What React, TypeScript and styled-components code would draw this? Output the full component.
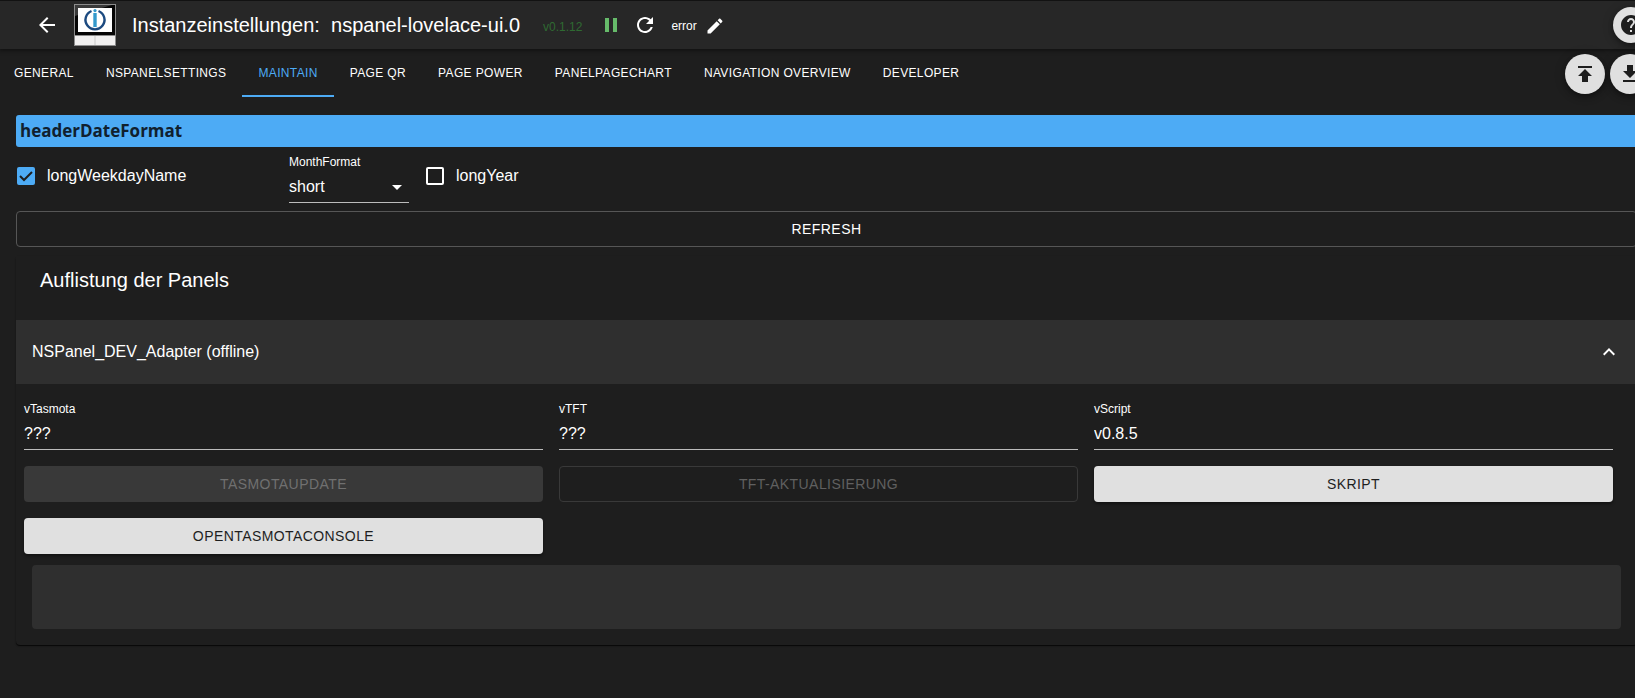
import React, { useState } from 'react';
import styled, { createGlobalStyle } from 'styled-components';

const blue = '#4dabf5';
const surface = '#1e1e1e';
const light = '#e0e0e0';

const GlobalStyle = createGlobalStyle`
  * { box-sizing: border-box; }
  html, body { margin: 0; background: ${surface}; }
  body {
    color: #fff;
    font-family: "Liberation Sans", Arial, sans-serif;
    font-size: 16px;
    line-height: 24px;
    overflow-x: hidden;
  }
  button, input, select { font: inherit; color: inherit; margin: 0; }
`;

const Page = styled.div`
  min-height: 100vh;
  overflow: hidden;
  border-top: 1px solid #121212;
`;

const AppBar = styled.header`
  display: flex;
  align-items: center;
  height: 48px;
  margin-right: -14px;
  padding-left: 35px;
  background: #272727;
  box-shadow: 0 1px 4px 1px rgba(0, 0, 0, 0.4);
`;

const IconButton = styled.button`
  display: flex;
  padding: 0;
  border: 0;
  background: none;
  cursor: pointer;
`;

const Logo = styled.svg`
  flex: none;
  width: 42px;
  height: 42px;
  margin: 0 16px 0 15px;
`;

const Title = styled.h1`
  margin: 0 23px 0 0;
  font-size: 20px;
  font-weight: 400;
  line-height: 28px;
  white-space: pre;
`;

const Version = styled.span`
  color: #2f6a32;
  font-size: 12px;
  padding-top: 4px;
`;

const Controls = styled.div`
  display: flex;
  align-items: center;
  gap: 10px;
  margin-left: 17px;
`;

const LogLevel = styled.div`
  display: flex;
  align-items: center;
  gap: 8px;
  margin-left: 4px;
  padding-top: 2px;
  font-size: 12px;
`;

const Spacer = styled.div`
  flex: 1;
`;

const Fab = styled.button<{ $size: number }>`
  display: flex;
  flex: none;
  align-items: center;
  justify-content: center;
  width: ${(p) => p.$size}px;
  height: ${(p) => p.$size}px;
  padding: 0;
  border: 0;
  border-radius: 50%;
  background: ${light};
  color: ${surface};
  box-shadow: 0 3px 5px rgba(0, 0, 0, 0.3), 0 1px 12px rgba(0, 0, 0, 0.2);
  cursor: pointer;
`;

const TabBar = styled.nav`
  display: flex;
  align-items: center;
  height: 48px;
  margin-right: -15px;
`;

const Tab = styled.button<{ $active?: boolean }>`
  height: 48px;
  padding: 2px 16px 0;
  border: 0;
  border-bottom: 2px solid ${(p) => (p.$active ? blue : 'transparent')};
  background: none;
  color: ${(p) => (p.$active ? blue : '#fff')};
  font-size: 12px;
  letter-spacing: 0.03em;
  text-transform: uppercase;
  white-space: nowrap;
  cursor: pointer;
  &:first-child { padding-left: 14px; }
`;

const FabGroup = styled.div`
  display: flex;
  gap: 5px;
  padding-top: 2px;
`;

const Content = styled.main`
  margin: 18px -2px 0 16px;
`;

const SectionTitle = styled.h2`
  margin: 0;
  padding: 0 4px;
  border-radius: 3px;
  background: ${blue};
  color: #10202e;
  font-family: "Open Sans", "Noto Sans", sans-serif;
  font-size: 17px;
  font-weight: 700;
  line-height: 32px;
`;

const Options = styled.div`
  display: flex;
  align-items: center;
  height: 64px;
  padding-bottom: 2px;
`;

const CheckLabel = styled.label<{ $width?: number }>`
  display: flex;
  align-items: center;
  gap: 12px;
  width: ${(p) => (p.$width ? `${p.$width}px` : 'auto')};
  padding: 0 1px 4px;
  cursor: pointer;
`;

const Checkbox = styled.input`
  appearance: none;
  width: 18px;
  height: 18px;
  border: 2px solid #fff;
  border-radius: 2px;
  cursor: pointer;
  &:checked {
    border-color: ${blue};
    background: ${blue} url("data:image/svg+xml,%3Csvg xmlns='http://www.w3.org/2000/svg' viewBox='0 0 14 14'%3E%3Cpath d='M1 7l4 4 8-8' fill='none' stroke='%231e1e1e' stroke-width='2'/%3E%3C/svg%3E") center / 14px 14px no-repeat;
  }
`;

const Field = styled.div<{ $width?: number }>`
  display: flex;
  flex-direction: column;
  width: ${(p) => (p.$width ? `${p.$width}px` : 'auto')};
`;

const FieldLabel = styled.label`
  font-size: 12px;
  line-height: 16px;
`;

const TextInput = styled.input`
  width: 100%;
  height: 33px;
  padding: 2px 0 0;
  border: 0;
  border-bottom: 1px solid #bcbcbc;
  border-radius: 0;
  background: none;
  outline: 0;
`;

const SelectInput = styled.select`
  appearance: none;
  height: 33px;
  padding: 2px 0 0;
  border: 0;
  border-bottom: 1px solid #bcbcbc;
  border-radius: 0;
  outline: 0;
  background: url("data:image/svg+xml,%3Csvg xmlns='http://www.w3.org/2000/svg' viewBox='0 0 24 24'%3E%3Cpath d='M7 10l5 5 5-5z' fill='%23fff'/%3E%3C/svg%3E") right bottom 3px / 24px 24px no-repeat;
  option { color: #000; }
`;

const MonthField = styled(Field)`
  margin-right: 16px;
`;

const Button = styled.button<{ $variant: 'outlined' | 'contained' }>`
  width: 100%;
  height: 36px;
  padding: 0 16px;
  border: ${(p) => (p.$variant === 'outlined' ? '1px solid #565656' : '0')};
  border-radius: 4px;
  background: ${(p) => (p.$variant === 'outlined' ? 'transparent' : light)};
  color: ${(p) => (p.$variant === 'outlined' ? '#fff' : surface)};
  box-shadow: ${(p) => (p.$variant === 'outlined' ? 'none' : '0 2px 3px rgba(0, 0, 0, 0.4)')};
  font-size: 14px;
  letter-spacing: 0.03em;
  text-transform: uppercase;
  cursor: pointer;
  &:disabled {
    border-color: #393939;
    background: ${(p) => (p.$variant === 'outlined' ? 'transparent' : '#393939')};
    color: ${(p) => (p.$variant === 'outlined' ? '#606060' : '#707070')};
    box-shadow: none;
    cursor: default;
  }
`;

const Paper = styled.section`
  margin-top: 9px;
  padding-bottom: 16px;
  border-radius: 4px;
  box-shadow: 0 1px 1px rgba(0, 0, 0, 0.7), 0 1px 2px rgba(0, 0, 0, 0.2);
`;

const PaperTitle = styled.h2`
  margin: 0;
  padding: 8px 24px 24px;
  background: ${surface};
  font-size: 20px;
  font-weight: 400;
  line-height: 32px;
`;

const AccordionHeader = styled.button`
  display: flex;
  align-items: center;
  justify-content: space-between;
  width: 100%;
  height: 64px;
  padding: 0 16px;
  border: 0;
  background: #2f2f2f;
  text-align: left;
  cursor: pointer;
`;

const PanelGrid = styled.div`
  display: grid;
  grid-template-columns: repeat(3, 1fr);
  gap: 16px;
  padding: 17px 24px 0 8px;
`;

const Output = styled.div`
  height: 64px;
  margin: 11px 16px 0;
  border-radius: 4px;
  background: #2f2f2f;
`;

const Icon = ({ d, size = 24, color = 'currentColor' }: { d: string; size?: number; color?: string }) => (
  <svg width={size} height={size} viewBox="0 0 24 24" fill={color} aria-hidden="true">
    <path d={d} />
  </svg>
);

const icons = {
  back: 'M20 11H7.83l5.59-5.59L12 4l-8 8 8 8 1.41-1.41L7.83 13H20v-2z',
  pause: 'M6 19h4V5H6v14zm8-14v14h4V5h-4z',
  refresh:
    'M17.65 6.35C16.2 4.9 14.21 4 12 4c-4.42 0-7.99 3.58-7.99 8s3.57 8 7.99 8c3.73 0 6.84-2.55 7.73-6h-2.08c-.82 2.33-3.04 4-5.65 4-3.31 0-6-2.69-6-6s2.69-6 6-6c1.66 0 3.14.69 4.22 1.78L13 11h7V4l-2.35 2.35z',
  edit: 'M3 17.25V21h3.75L17.81 9.94l-3.75-3.75L3 17.25zM20.71 7.04c.39-.39.39-1.02 0-1.41l-2.34-2.34c-.39-.39-1.02-.39-1.41 0l-1.83 1.83 3.75 3.75 1.83-1.83z',
  help: 'M12 2C6.48 2 2 6.48 2 12s4.48 10 10 10 10-4.48 10-10S17.52 2 12 2zm1 17h-2v-2h2v2zm2.07-7.75l-.9.92C13.45 12.9 13 13.5 13 15h-2v-.5c0-1.1.45-2.1 1.17-2.83l1.24-1.26c.37-.36.59-.86.59-1.41 0-1.1-.9-2-2-2s-2 .9-2 2H8c0-2.21 1.79-4 4-4s4 1.79 4 4c0 .88-.36 1.68-.93 2.25z',
  upload: 'M5 4v2h14V4H5zm0 10h4v6h6v-6h4l-7-7-7 7z',
  download: 'M19 9h-4V3H9v6H5l7 7 7-7zM5 18v2h14v-2H5z',
  up: 'M12 8l-6 6 1.41 1.41L12 10.83l4.59 4.58L18 14z',
};

const tabs = [
  'General',
  'NSPanelSettings',
  'Maintain',
  'Page QR',
  'Page Power',
  'PanelPageChart',
  'Navigation Overview',
  'Developer',
];

const fields = [
  { id: 'vTasmota', value: '???' },
  { id: 'vTFT', value: '???' },
  { id: 'vScript', value: 'v0.8.5' },
];

export default function App() {
  const [active, setActive] = useState('Maintain');
  const [open, setOpen] = useState(true);

  return (
    <>
      <GlobalStyle />
      <Page>
        <AppBar>
          <IconButton aria-label="Zurück">
            <Icon d={icons.back} />
          </IconButton>
          <Logo viewBox="0 0 42 42" aria-hidden="true">
            <rect width="42" height="42" fill="#8c8c8c" />
            <rect x="1" y="1" width="40" height="30" fill="#050505" />
            <path d="M1 1H38L1 12z" fill="#3a3a3a" />
            <rect x="4" y="4" width="34" height="24" fill="#fff" />
            <rect x="1" y="32" width="40" height="9" fill="#f1f0f0" />
            <path d="M21 32v9" stroke="#c8c8c8" />
            <path d="M17.5 7a9.5 9.5 0 1 0 7 0" fill="none" stroke="#1c4a80" strokeWidth="2.4" />
            <path d="M21 9v14" stroke="#3399cc" strokeWidth="3.4" />
            <circle cx="21" cy="6.6" r="1.6" fill="#3399cc" />
          </Logo>
          <Title>{'Instanzeinstellungen:  nspanel-lovelace-ui.0'}</Title>
          <Version>v0.1.12</Version>
          <Controls>
            <IconButton aria-label="Pause">
              <Icon d={icons.pause} color="#66bb6a" />
            </IconButton>
            <IconButton aria-label="Neu starten">
              <Icon d={icons.refresh} />
            </IconButton>
            <LogLevel>
              error
              <IconButton aria-label="Log-Level bearbeiten">
                <Icon d={icons.edit} size={20} />
              </IconButton>
            </LogLevel>
          </Controls>
          <Spacer />
          <Fab $size={36} aria-label="Hilfe">
            <Icon d={icons.help} />
          </Fab>
        </AppBar>

        <TabBar>
          {tabs.map((t) => (
            <Tab key={t} $active={t === active} onClick={() => setActive(t)}>
              {t}
            </Tab>
          ))}
          <Spacer />
          <FabGroup>
            <Fab $size={40} aria-label="Importieren">
              <Icon d={icons.upload} />
            </Fab>
            <Fab $size={40} aria-label="Exportieren">
              <Icon d={icons.download} />
            </Fab>
          </FabGroup>
        </TabBar>

        <Content>
          <SectionTitle>headerDateFormat</SectionTitle>
          <Options>
            <CheckLabel $width={273}>
              <Checkbox type="checkbox" defaultChecked />
              longWeekdayName
            </CheckLabel>
            <MonthField $width={120}>
              <FieldLabel htmlFor="month">MonthFormat</FieldLabel>
              <SelectInput id="month" defaultValue="short">
                <option>short</option>
                <option>long</option>
              </SelectInput>
            </MonthField>
            <CheckLabel>
              <Checkbox type="checkbox" />
              longYear
            </CheckLabel>
          </Options>
          <Button $variant="outlined">Refresh</Button>

          <Paper>
            <PaperTitle>Auflistung der Panels</PaperTitle>
            <AccordionHeader aria-expanded={open} onClick={() => setOpen(!open)}>
              NSPanel_DEV_Adapter (offline)
              <Icon d={icons.up} />
            </AccordionHeader>
            {open && (
              <>
                <PanelGrid>
                  {fields.map((f) => (
                    <Field key={f.id}>
                      <FieldLabel htmlFor={f.id}>{f.id}</FieldLabel>
                      <TextInput id={f.id} defaultValue={f.value} />
                    </Field>
                  ))}
                  <Button $variant="contained" disabled>TasmotaUpdate</Button>
                  <Button $variant="outlined" disabled>TFT-Aktualisierung</Button>
                  <Button $variant="contained">Skript</Button>
                  <Button $variant="contained">openTasmotaConsole</Button>
                </PanelGrid>
                <Output />
              </>
            )}
          </Paper>
        </Content>
      </Page>
    </>
  );
}
